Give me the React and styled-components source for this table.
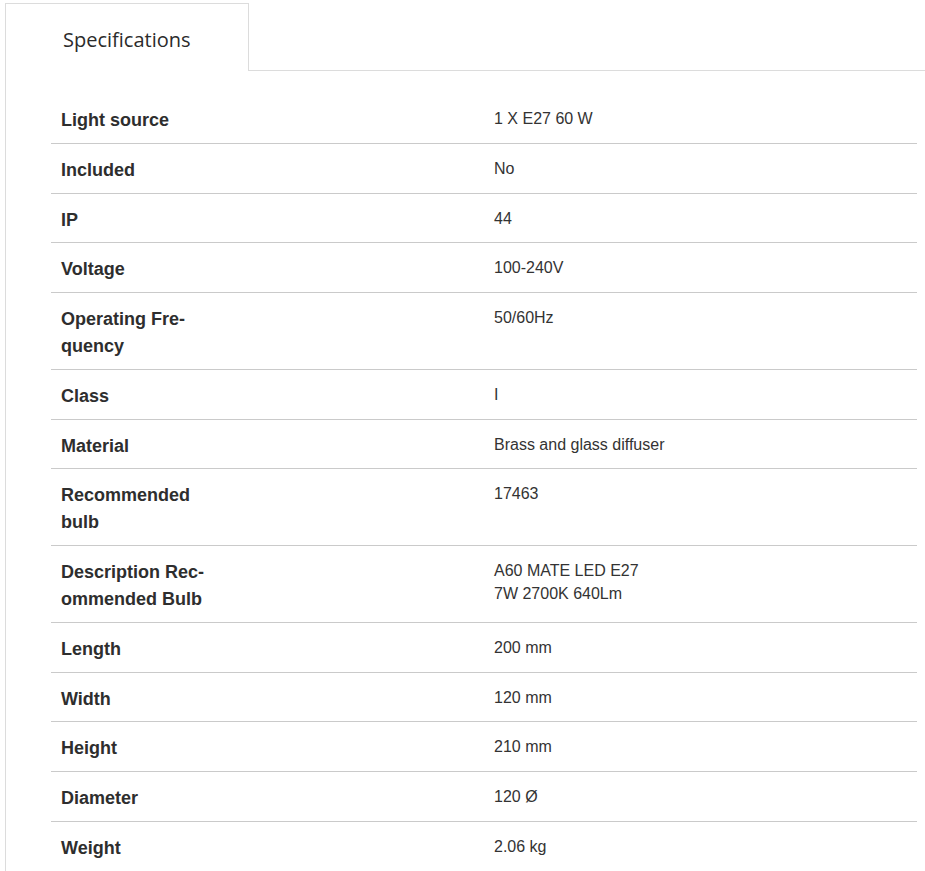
import styled, { createGlobalStyle } from 'styled-components';

const specs = [
  { label: 'Light source', value: ['1 X E27 60 W'] },
  { label: 'Included', value: ['No'] },
  { label: 'IP', value: ['44'] },
  { label: 'Voltage', value: ['100-240V'] },
  { label: 'Operating Fre\u00ADquency', value: ['50/60Hz'] },
  { label: 'Class', value: ['I'] },
  { label: 'Material', value: ['Brass and glass diffuser'] },
  { label: 'Recommended bulb', value: ['17463'] },
  {
    label: 'Description Rec\u00ADommended Bulb',
    value: ['A60 MATE LED E27', '7W 2700K 640Lm'],
  },
  { label: 'Length', value: ['200 mm'] },
  { label: 'Width', value: ['120 mm'] },
  { label: 'Height', value: ['210 mm'] },
  { label: 'Diameter', value: ['120 Ø'] },
  { label: 'Weight', value: ['2.06 kg'] },
];

const SpecsPage = () => {
  return (
    <>
      <GlobalStyle />
      <Wrapper>
        <TabBar>
          <Tab>Specifications</Tab>
          <TabRest />
        </TabBar>
        <Panel>
          {specs.map((row) => (
            <Row key={row.label}>
              <Label>
                <LabelText>{row.label}</LabelText>
              </Label>
              <Value>
                {row.value.map((line) => (
                  <div key={line}>{line}</div>
                ))}
              </Value>
            </Row>
          ))}
        </Panel>
      </Wrapper>
    </>
  );
};

const GlobalStyle = createGlobalStyle`
  body {
    margin: 0;
    background: #fff;
    font-family: "Liberation Sans", Arial, sans-serif;
    color: #333;
  }
`;

const Wrapper = styled.div`
  padding: 3px 0 0 5px;
  width: 920px;
  overflow: hidden;
`;

const TabBar = styled.div`
  display: flex;
  align-items: stretch;
`;

const Tab = styled.div`
  width: 244px;
  height: 68px;
  box-sizing: border-box;
  padding: 3px 0 0 57px;
  border: 1px solid #dcdcdc;
  border-bottom: none;
  display: flex;
  align-items: center;
  font-family: "Open Sans", sans-serif;
  font-size: 20px;
  color: #2b2b2b;
  background: #fff;
`;

const TabRest = styled.div`
  flex: 1;
  border-bottom: 1px solid #dcdcdc;
`;

const Panel = styled.div`
  border-left: 1px solid #dcdcdc;
  padding: 23px 8px 0 45px;
`;

const Row = styled.div`
  display: grid;
  grid-template-columns: 1fr 1fr;
  border-bottom: 1px solid #cacaca;
`;

const Label = styled.div`
  padding: 13px 10px 8.75px;
  font-size: 18px;
  font-weight: bold;
  line-height: 27px;
  color: #2e2e2e;
`;

const LabelText = styled.div`
  max-width: 160px;
`;

const Value = styled.div`
  padding: 13px 10px 8px;
  font-size: 16px;
  line-height: 23px;
  color: #333;
`;

export default SpecsPage;
